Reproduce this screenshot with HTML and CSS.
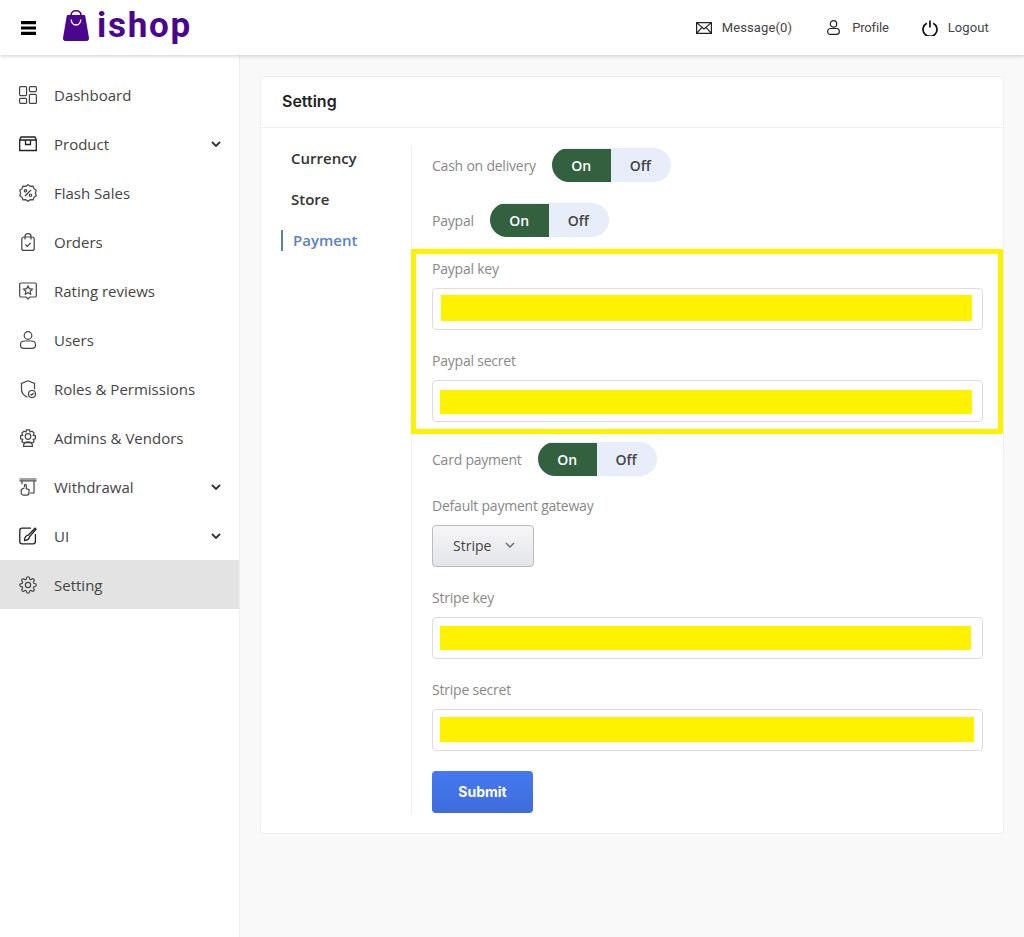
FILE: index.html
```html
<!DOCTYPE html>
<html lang="en">
<head>
<meta charset="utf-8">
<title>ishop - Setting</title>
<link rel="stylesheet" href="styles.css">
</head>
<body>
<header class="topbar">
  <svg class="burger" viewBox="0 0 15 14"><path d="M.5 0h14a1 1 0 0 1 0 3.2H.5a1 1 0 0 1 0-3.200zM.5 5.400h14a1 1 0 0 1 0 3.200H.5a1 1 0 0 1 0-3.200zM.5 10.800h14a1 1 0 0 1 0 3.200H.5a1 1 0 0 1 0-3.200z"/></svg>
  <svg class="bag" viewBox="0 0 26 31"><path class="bag-body" d="M5 5h16c.7 0 1.200.5 1.300 1.200L26 28c.2 1.500-.8 3-2.300 3H2.300C.8 31-.2 29.500 0 28L3.700 6.200C3.800 5.500 4.300 5 5 5z"/><path class="bag-handle" d="M8 6.500V5.500C8 2.500 10 .8 13 .8s5 1.700 5 4.700v1"/><path class="bag-smile" d="M8.200 9.500c.3 3.500 2.300 5.500 4.800 5.500s4.500-2 4.800-5.500"/></svg>
  <span class="brand">ishop</span>
  <nav class="toplinks">
    <a class="toplink link-message"><svg class="topicon" viewBox="0 0 16 12"><path d="M.6.6h14.800v10.800H.6zM.6.6 8 7l7.400-6.400M.6 11.400 6 5.300M15.400 11.400 10 5.300"/></svg>Message(0)</a>
    <a class="toplink link-profile"><svg class="topicon" viewBox="0 0 13 15"><circle cx="6.500" cy="3.900" r="3.200"/><path d="M3.500 8.500h6c1.700 0 2.800 1.200 2.800 2.800v.5c0 1.500-1.100 2.600-2.800 2.600h-6C1.800 14.400.7 13.300.7 11.800v-.5c0-1.600 1.100-2.800 2.800-2.800z"/></svg>Profile</a>
    <a class="toplink link-logout"><svg class="topicon power" viewBox="0 0 16 16"><path d="M4.800 3.200a7 7 0 1 0 6.400 0M8 .5v7"/></svg>Logout</a>
  </nav>
</header>
<div class="layout">
  <aside class="sidebar">
    <a class="nav-item"><svg class="nav-icon" viewBox="0 0 18 18"><rect x=".6" y=".6" width="7" height="9" rx="1"/><rect x="10.400" y=".6" width="7" height="5" rx="1"/><rect x=".6" y="12.400" width="7" height="5" rx="1"/><rect x="10.400" y="8.400" width="7" height="9" rx="1"/></svg><span>Dashboard</span></a>
    <a class="nav-item"><svg class="nav-icon dark" viewBox="0 0 18 18"><path d="M.7 5h16.600v10.500H.7zM2 2h14l1.300 3H.7zM6.500 5v4.500h5V5"/></svg><span>Product</span><svg class="chev" viewBox="0 0 10 6"><path d="M1 1l4 4 4-4"/></svg></a>
    <a class="nav-item"><svg class="nav-icon" viewBox="0 0 18 18"><path d="M9 .8l2.300 1.500 2.700-.1 1 2.500 2.200 1.600-.8 2.700.8 2.700-2.200 1.600-1 2.500-2.700-.1L9 17.200l-2.300-1.500-2.700.1-1-2.500-2.200-1.600.8-2.700-.8-2.700L3 4.700l1-2.500 2.700.1z"/><path d="M6 12l6-6"/><circle cx="6.500" cy="6.800" r="1.200"/><circle cx="11.500" cy="11.200" r="1.200"/></svg><span>Flash Sales</span></a>
    <a class="nav-item"><svg class="nav-icon" viewBox="0 0 18 18"><rect x="2.800" y="4" width="12.400" height="13.400" rx="2"/><path d="M6 6.500V3.300C6 1.700 7.200.7 9 .7s3 1 3 2.600v3.200M6.500 11.500l1.800 1.800 3.200-3.300"/></svg><span>Orders</span></a>
    <a class="nav-item"><svg class="nav-icon" viewBox="0 0 18 18"><path d="M2 1h14c.8 0 1.300.5 1.300 1.300v11.400c0 .8-.5 1.300-1.300 1.300h-5l-2 2-2-2H2c-.8 0-1.300-.5-1.300-1.300V2.300C.7 1.500 1.200 1 2 1z"/><path d="M9 4l1.400 2.700 3 .4-2.200 2.100.5 3L9 10.800l-2.700 1.400.5-3-2.200-2.100 3-.4z"/></svg><span>Rating reviews</span></a>
    <a class="nav-item"><svg class="nav-icon" viewBox="0 0 18 18"><circle cx="9" cy="4.500" r="3.800"/><path d="M5.500 10h7c2.500 0 4 1.700 4 3.800v.2c0 2-1.500 3.400-3.500 3.400H5c-2 0-3.500-1.400-3.500-3.400v-.2C1.500 11.700 3 10 5.500 10z"/></svg><span>Users</span></a>
    <a class="nav-item"><svg class="nav-icon" viewBox="0 0 18 18"><path d="M9 .8l6.500 2.700v6M9 .8 2.500 3.500v5.500c0 3.800 2.500 6.800 6 8.200"/><circle cx="13" cy="14" r="3.500"/><path d="M11.500 14l1.200 1.200 2-2.200"/></svg><span>Roles &amp; Permissions</span></a>
    <a class="nav-item"><svg class="nav-icon" viewBox="0 0 18 18"><path d="M7.500.8h3l.5 2.200 2-.9 2.200 2.100-1 2 2.200.6v3l-2.200.6 1 2-1.200 1.200H4l-1.200-1.200 1-2-2.200-.6v-3l2.200-.6-1-2L5 2.100l2 .9z"/><circle cx="9" cy="7.500" r="2.800"/><path d="M4.500 17.300c0-3 2-4.500 4.500-4.500s4.500 1.500 4.500 4.500z"/></svg><span>Admins &amp; Vendors</span></a>
    <a class="nav-item"><svg class="nav-icon" viewBox="0 0 18 18"><path d="M.5 1h17M.5 2.800h17M3 2.800v3.500M15 2.800v12.200h-4"/><path d="M5.500 9V7.300c0-1.200 1.800-1.200 1.800 0v3.500l2.700.7v3.200c0 1.300-1 2.400-2.300 2.400H4.500c-1.300 0-2.300-1.100-2.300-2.500v-3l3.300-1.800"/></svg><span>Withdrawal</span><svg class="chev" viewBox="0 0 10 6"><path d="M1 1l4 4 4-4"/></svg></a>
    <a class="nav-item"><svg class="nav-icon dark" viewBox="0 0 18 18"><path d="M12 1.200H3C1.700 1.200.8 2.100.8 3.400v11.200c0 1.300.9 2.200 2.200 2.200h11.200c1.300 0 2.200-.9 2.200-2.200V7"/><path d="M5.500 13.500c0-3.200 1.500-4.800 3.700-5.300L16 1.200l1 1-6.300 7.300c-.5 2.300-2 3.700-5.200 4z"/></svg><span>UI</span><svg class="chev" viewBox="0 0 10 6"><path d="M1 1l4 4 4-4"/></svg></a>
    <a class="nav-item active"><svg class="nav-icon gear" viewBox="0 0 24 24"><circle cx="12" cy="12" r="3.500"/><path d="M19.400 15a1.650 1.650 0 0 0 .33 1.820l.06.06a2 2 0 0 1 0 2.830 2 2 0 0 1-2.830 0l-.06-.06a1.650 1.650 0 0 0-1.820-.33 1.650 1.650 0 0 0-1 1.510V21a2 2 0 0 1-2 2 2 2 0 0 1-2-2v-.09A1.650 1.650 0 0 0 9 19.400a1.650 1.650 0 0 0-1.820.33l-.06.06a2 2 0 0 1-2.830 0 2 2 0 0 1 0-2.830l.06-.06a1.650 1.650 0 0 0 .33-1.820 1.650 1.650 0 0 0-1.510-1H3a2 2 0 0 1-2-2 2 2 0 0 1 2-2h.09A1.650 1.650 0 0 0 4.600 9a1.650 1.650 0 0 0-.33-1.820l-.06-.06a2 2 0 0 1 0-2.830 2 2 0 0 1 2.830 0l.06.06a1.650 1.650 0 0 0 1.820.33H9a1.650 1.650 0 0 0 1-1.510V3a2 2 0 0 1 2-2 2 2 0 0 1 2 2v.09a1.650 1.650 0 0 0 1 1.510 1.650 1.650 0 0 0 1.820-.33l.06-.06a2 2 0 0 1 2.830 0 2 2 0 0 1 0 2.830l-.06.06a1.650 1.650 0 0 0-.33 1.820V9a1.650 1.650 0 0 0 1.510 1H21a2 2 0 0 1 2 2 2 2 0 0 1-2 2h-.09a1.650 1.650 0 0 0-1.510 1z"/></svg><span>Setting</span></a>
  </aside>
  <main class="content">
    <section class="card">
      <h1 class="card-title">Setting</h1>
      <div class="card-body">
        <ul class="tabs">
          <li class="tab">Currency</li>
          <li class="tab">Store</li>
          <li class="tab tab-active">Payment</li>
        </ul>
        <form class="pane">
          <div class="toggle-row first">
            <span class="label">Cash on delivery</span>
            <div class="toggle"><span class="seg on">On</span><span class="seg off">Off</span></div>
          </div>
          <div class="toggle-row">
            <span class="label">Paypal</span>
            <div class="toggle"><span class="seg on">On</span><span class="seg off">Off</span></div>
          </div>
          <div class="highlight">
            <div class="label">Paypal key</div>
            <div class="field fill-a"><div class="mask"></div></div>
            <div class="label gap">Paypal secret</div>
            <div class="field fill-b"><div class="mask"></div></div>
          </div>
          <div class="toggle-row card-row">
            <span class="label">Card payment</span>
            <div class="toggle"><span class="seg on">On</span><span class="seg off">Off</span></div>
          </div>
          <div class="label gateway">Default payment gateway</div>
          <div class="select"><span class="select-text">Stripe</span><svg class="select-chev" viewBox="0 0 10 6"><path d="M1 1l4 4 4-4"/></svg></div>
          <div class="label gap">Stripe key</div>
          <div class="field fill-c"><div class="mask"></div></div>
          <div class="label gap">Stripe secret</div>
          <div class="field fill-d"><div class="mask"></div></div>
          <button class="submit" type="button">Submit</button>
        </form>
      </div>
    </section>
  </main>
</div>
</body>
</html>
```
FILE: styles.css
```css
* { box-sizing: border-box; }
html, body { margin: 0; height: 100%; }
body { height: 937px; overflow: hidden; background: #f9f9f9; font-family: "Open Sans", sans-serif; color: #333; display: flex; flex-direction: column; }

.topbar { height: 55px; flex: none; background: #fff; box-shadow: 0 1px 4px rgba(0,0,0,.2); display: flex; align-items: center; padding-left: 21px; position: relative; z-index: 2; }
.burger { width: 15px; height: 14px; fill: #000; margin-right: 27px; }
.bag { width: 26px; height: 31px; margin-right: 8px; margin-top: -4px; overflow: visible; }
.bag-body { fill: #4b0690; }
.bag-handle { fill: none; stroke: #4b0690; stroke-width: 1.6; }
.bag-smile { fill: none; stroke: #fff; stroke-width: 1.4; }
.brand { font-family: Roboto, sans-serif; font-weight: 700; font-size: 35px; line-height: 40px; letter-spacing: 1.7px; color: #4b0690; margin-top: -4px; }
.toplinks { margin-left: auto; display: flex; padding-right: 35px; }
.toplink { display: flex; align-items: center; font-family: Roboto, sans-serif; font-size: 13px; letter-spacing: .12px; color: #444; }
.link-profile { margin-left: 35px; letter-spacing: -.15px; }
.link-logout { margin-left: 33px; }
.topicon { fill: none; stroke: #222; stroke-width: 1.2; margin-right: 10px; }
.link-message .topicon { width: 16px; height: 12px; }
.link-profile .topicon { width: 13px; height: 15px; margin-right: 12px; }
.power { width: 16px; height: 16px; stroke-width: 1.7; stroke: #111; }

.layout { flex: 1; display: flex; min-height: 0; }
.sidebar { width: 240px; flex: none; background: #fff; border-right: 1px solid #eee; padding-top: 15px; }
.nav-item { height: 49px; display: flex; align-items: center; padding: 0 18px 0 19px; font-size: 15px; color: #444; }
.nav-item span { margin-left: 17px; flex: 1; }
.nav-item.active { background: #e3e3e3; }
.nav-icon { width: 18px; height: 18px; flex: none; fill: none; stroke: #444; stroke-width: 1.2; }
.nav-icon.dark { stroke: #222; stroke-width: 1.3; }
.nav-icon.gear { stroke-width: 1.6; }
.chev { width: 10px; height: 6px; fill: none; stroke: #333; stroke-width: 1.8; }

.content { flex: 1; padding: 21px 20px 0 20px; min-width: 0; }
.card { background: #fff; border: 1px solid #eee; border-radius: 4px; height: 758px; }
.card-title { margin: 0; height: 51px; border-bottom: 1px solid #eee; padding-left: 21px; font-family: Inter, sans-serif; font-weight: 600; font-size: 16px; line-height: 48px; color: #222; }
.card-body { display: flex; padding-top: 17px; }
.tabs { list-style: none; margin: 0; padding: 0 0 0 20px; width: 150px; flex: none; }
.tab { height: 41px; line-height: 26px; font-size: 15px; font-weight: 600; padding-left: 10px; color: #333; position: relative; }
.tab-active { color: #5b80c4; padding-left: 12px; }
.tab-active::before { content: ""; position: absolute; left: 0; top: 3px; width: 2px; height: 21px; background: #5b82a8; }

.pane { flex: 1; height: 670px; border-left: 1px solid #eee; padding: 3px 20px 0 20px; min-width: 0; }
.label { font-size: 14px; height: 20px; line-height: 22px; color: #888; letter-spacing: -.22px; }
.label.gap { margin-top: 20px; }
.toggle-row { display: flex; align-items: center; height: 34px; margin-bottom: 21px; }
.toggle-row .label { margin-right: 16px; }
.toggle-row.card-row { margin: 8px 0 0; }
.toggle { display: flex; width: 119px; height: 34px; border-radius: 17px; overflow: hidden; background: #e8eef9; font-size: 14px; }
.seg { width: 59px; display: flex; align-items: center; justify-content: center; margin: 0; }
.seg.on { background: #33603f; color: #fff; font-weight: 600; height: 33px; margin-top: 1px; }
.seg.off { width: 60px; color: #444; font-weight: 600; padding-right: 1px; }

.highlight { margin: -9px -20px 0 -21px; padding: 4px 15px 7px 16px; border: 5px solid #fff200; height: 185px; }
.field { height: 42px; margin-top: 10px; border: 1px solid #ddd; border-radius: 4px; background: #fff; }
.mask { background: #fff200; }
.fill-a .mask { margin: 6px 10px 0 8px; height: 26px; }
.fill-b .mask { margin: 9px 10px 0 7px; height: 24px; }
.fill-c .mask { margin: 8px 11px 0 7px; height: 24px; }
.fill-d .mask { margin: 7px 8px 0 7px; height: 25px; }

.gateway { margin-top: 19px; }
.select { width: 102px; height: 42px; margin-top: 10px; border: 1px solid #bbb; border-radius: 4px; background: linear-gradient(#f6f6f8, #e4e5e9); display: flex; align-items: center; padding: 0 0 2px 20px; font-size: 14px; color: #444; }
.select-chev { width: 10px; height: 6px; margin-left: 14px; fill: none; stroke: #666; stroke-width: 1.3; }
.submit { display: block; width: 101px; height: 42px; margin-top: 20px; padding: 0 0 2px; border: 0; border-radius: 4px; background: linear-gradient(#4579f0, #3f6cdc); color: #fff; font-family: Inter, sans-serif; font-weight: 700; font-size: 14px; }
```
